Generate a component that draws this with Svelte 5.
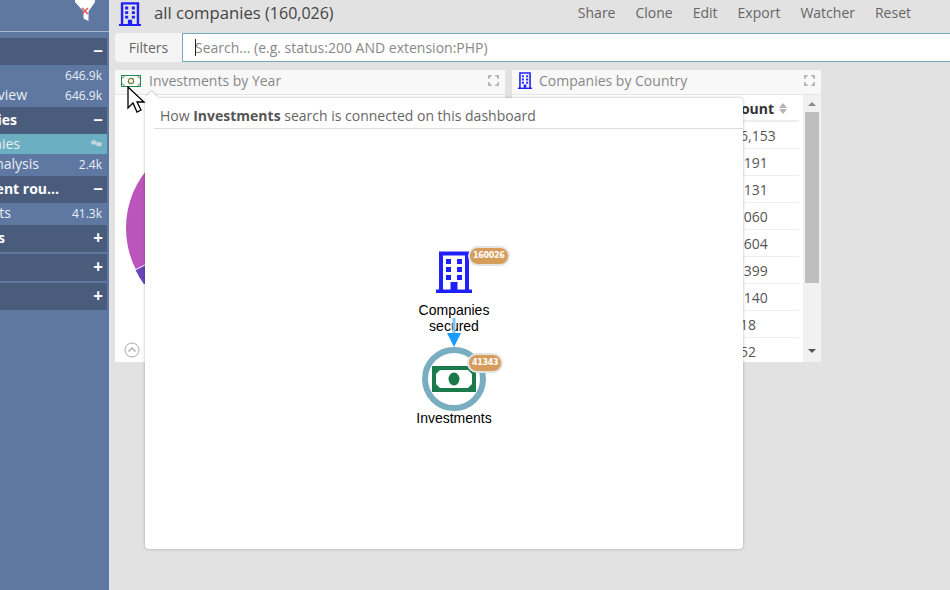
<script>
  const sideItems = [
    { type: 'head', end: 0, text: '', icon: '−' },
    { type: 'row', end: 0, text: '', value: '646.9k' },
    { type: 'row', end: 27, text: 'Overview', value: '646.9k' },
    { type: 'head', end: 17, text: 'Companies', icon: '−', gap: true },
    { type: 'row active', end: 20, text: 'All companies', value: '' },
    { type: 'row', end: 39, text: 'Analysis', value: '2.4k' },
    { type: 'head', end: 59, text: 'Investment rou...', icon: '−', gap: true },
    { type: 'row', end: 11, text: 'Investments', value: '41.3k' },
    { type: 'head', end: 5, text: 'Funds', icon: '+', gap: true },
    { type: 'head', end: 0, text: '', icon: '+', gap: true },
    { type: 'head', end: 0, text: '', icon: '+', gap: true }
  ];
  const menu = ['Share', 'Clone', 'Edit', 'Export', 'Watcher', 'Reset'];
  const counts = ['36,153', '5,191', '4,131', '3,060', '2,604', '2,399', '2,140', '918', '752'];
</script>

{#snippet building()}
  <svg class="building" viewBox="0 0 36 42" preserveAspectRatio="none">
    <path d="M5 40V2.5h26V40" fill="none" stroke="#2020ff" stroke-width="4" />
    <path d="M0 38.5h36V42H0z" fill="#2020ff" />
    <path d="M14.5 31h7v8h-7z" fill="#2020ff" />
    <path d="M10 8h5v5h-5zM21 8h5v5h-5zM10 16h5v5h-5zM21 16h5v5h-5zM10 24h5v5h-5zM21 24h5v5h-5z" fill="#2020ff" />
  </svg>
{/snippet}

{#snippet expand()}
  <svg class="expand" viewBox="0 0 12 12">
    <path d="M1 4V1h3M8 1h3v3M11 8v3H8M4 11H1V8" fill="none" stroke="#999" stroke-width="1.4" />
  </svg>
{/snippet}

<div class="app">
  <aside class="sidebar">
    <div class="brand">
      <svg class="funnel" viewBox="0 0 20 22">
        <path d="M0 0h20v2l-6.5 9.5V21L8.5 18.5v-7L0 2z" fill="#fff" />
        <path d="M7 8l6 6M13 8l-6 6" stroke="#e0555a" stroke-width="1.6" />
      </svg>
    </div>
    <nav class="nav">
      {#each sideItems as item}
        <div class="{item.type}" class:gap={item.gap}>
          <div class="label" style="width: {item.end}px"><span>{item.text}</span></div>
          {#if item.type === 'head'}
            <span class="toggle">{item.icon}</span>
          {:else if item.value}
            <span class="value">{item.value}</span>
          {:else}
            <svg class="link" viewBox="0 0 11 7">
              <ellipse cx="3" cy="2.5" rx="2.8" ry="2.2" fill="#c3d4dc" />
              <ellipse cx="8" cy="4.2" rx="2.8" ry="2.2" fill="#c3d4dc" />
            </svg>
          {/if}
        </div>
      {/each}
    </nav>
  </aside>

  <main class="main">
    <header class="topbar">
      <div class="title">
        {@render building()}
        <span>all companies <small>(160,026)</small></span>
      </div>
      <div class="menu">
        {#each menu as m}<span>{m}</span>{/each}
      </div>
    </header>

    <div class="filters">
      <div class="filters-label">Filters</div>
      <div class="search"><i></i>Search... (e.g. status:200 AND extension:PHP)</div>
    </div>

    <div class="panels">
      <section class="panel first">
        <div class="panel-head">
          <svg class="money-small" viewBox="0 0 20 12">
            <rect x=".5" y=".5" width="19" height="11" fill="#fff" stroke="#1d8a5a" />
            <path d="M.5 3.5Q3 3 3.5.5M16.5.5Q17 3 19.5 3.5M.5 8.5Q3 9 3.5 11.5M16.5 11.5Q17 9 19.5 8.5" fill="none" stroke="#6b7f3a" />
            <circle cx="10" cy="6" r="2.6" fill="none" stroke="#6d7a3a" stroke-width="1.2" />
          </svg>
          <span class="panel-title">Investments by Year</span>
          {@render expand()}
        </div>
        <div class="pie-body">
          <svg class="pie" viewBox="0 0 184 184">
            <circle cx="92" cy="92" r="92" fill="#bb55bb" />
            <path d="M92 92L9 134A93 93 0 0 0 18 149z" fill="#6a45b8" stroke="#fff" stroke-width="1" />
          </svg>
          <svg class="collapse" viewBox="0 0 16 16">
            <circle cx="8" cy="8" r="7" fill="none" stroke="#aaa" />
            <path d="M4.5 9.5L8 6l3.5 3.5" fill="none" stroke="#aaa" stroke-width="1.4" />
          </svg>
        </div>
      </section>

      <section class="panel second">
        <div class="panel-head">
          <span class="small-building">{@render building()}</span>
          <span class="panel-title">Companies by Country</span>
          {@render expand()}
        </div>
        <div class="table-wrap">
          <table>
            <thead>
              <tr><th></th><th>Count <span class="sort"><b></b><u></u></span></th></tr>
            </thead>
            <tbody>
              {#each counts as c}
                <tr><td></td><td>{c}</td></tr>
              {/each}
            </tbody>
          </table>
          <div class="scrollbar">
            <span class="up"></span>
            <span class="thumb"></span>
            <span class="down"></span>
          </div>
        </div>
      </section>
    </div>
  </main>

  <div class="popover">
    <div class="pop-title">How <b>Investments</b> search is connected on this dashboard</div>
    <div class="graph">
      <div class="node companies">
        {@render building()}
        <span class="badge">160026</span>
        <div class="node-label">Companies<br />secured</div>
      </div>
      <svg class="edge" viewBox="0 0 14 30">
        <path d="M7 0v16" stroke="#7cc4f5" stroke-width="3" />
        <path d="M0 15h14L7 29z" fill="#1a9cff" />
      </svg>
      <div class="node investments">
        <div class="ring">
          <svg viewBox="0 0 44 26">
            <path fill-rule="evenodd" d="M0 0h44v26H0zM8 4L4 8v10l4 4h28l4-4V8l-4-4z" fill="#1a7a4c" />
            <ellipse cx="22" cy="13" rx="5.5" ry="6.5" fill="#1a7a4c" />
          </svg>
        </div>
        <span class="badge">41343</span>
        <div class="node-label">Investments</div>
      </div>
    </div>
  </div>

  <svg class="cursor" viewBox="0 0 20 27">
    <path d="M1 1v21l5-5 4 9 4-2-4-8h7z" fill="#fff" stroke="#000" stroke-width="1.3" />
  </svg>
</div>

<style>
  :global(body) {
    margin: 0;
    background: #e2e2e2;
    overflow: hidden;
  }
  .app {
    display: flex;
    width: 950px;
    height: 590px;
    overflow: hidden;
    position: relative;
    font-family: "Open Sans", sans-serif;
    color: #555;
  }
  .sidebar {
    width: 109px;
    flex: none;
    background: #5f78a2;
    overflow: hidden;
    color: #fff;
  }
  .brand {
    height: 31px;
    border-bottom: 1px solid #a9b7cc;
    display: flex;
    justify-content: flex-end;
    padding-right: 14px;
  }
  .funnel {
    width: 20px;
    height: 22px;
  }
  .nav {
    padding-top: 6px;
    width: 107px;
  }
  .head, .row {
    display: flex;
    align-items: center;
    justify-content: space-between;
    white-space: nowrap;
  }
  .head {
    height: 27px;
    background: #4a5c7c;
    font-weight: 700;
    font-size: 14px;
  }
  .head .label {
    margin-top: -2px;
  }
  .head.gap { margin-top: 2px; }
  .row {
    height: 20px;
    font-size: 14px;
    color: #e9eef5;
  }
  .row .label {
    margin-top: -1px;
  }
  .row.active {
    background: #6dafc2;
  }
  .label {
    display: flex;
    justify-content: flex-end;
    flex: none;
  }
  .toggle {
    font-size: 17px;
    font-weight: 700;
    margin: -2px 4px 0 0;
    line-height: 1;
  }
  .value {
    font-size: 12px;
    margin-right: 5px;
  }
  .link {
    width: 11px;
    height: 7px;
    margin: -2px 5px 0 0;
  }
  .main {
    flex: 1;
    min-width: 0;
    padding-left: 6px;
  }
  .topbar {
    height: 32px;
    display: flex;
    align-items: flex-start;
    justify-content: space-between;
    padding-right: 39px;
  }
  .title {
    display: flex;
    align-items: flex-start;
    gap: 13px;
    font-size: 16.7px;
    line-height: 26px;
    color: #444;
    margin-left: 4px;
  }
  .title small {
    font-size: 16px;
  }
  .topbar :global(.building) {
    width: 22px;
    height: 24px;
    display: block;
    margin-top: 2px;
  }
  .menu {
    display: flex;
    gap: 20px;
    font-size: 14px;
    line-height: 26px;
    color: #666;
  }
  .filters {
    display: flex;
    height: 29px;
    margin-top: 1px;
  }
  .filters-label {
    width: 67px;
    background: #f5f5f5;
    border-radius: 4px 0 0 4px;
    font-size: 14px;
    text-align: center;
    line-height: 30px;
    color: #666;
  }
  .search {
    flex: 1;
    background: #fff;
    border: 1px solid #6facbd;
    border-right: none;
    font-size: 14px;
    line-height: 27px;
    color: #888;
    padding-left: 12px;
    position: relative;
  }
  .search i {
    position: absolute;
    left: 12px;
    top: 5px;
    width: 1px;
    height: 17px;
    background: #222;
  }
  .panels {
    display: flex;
    gap: 7px;
    margin-top: 8px;
  }
  .panel {
    height: 292px;
    background: #fff;
    overflow: hidden;
  }
  .first { width: 390px; }
  .second { width: 309px; }
  .panel-head {
    background: #f8f8f8;
    border-bottom: 1px solid #e6e6e6;
    display: flex;
    align-items: center;
    padding: 0 6px 3px;
    height: 21px;
    font-size: 14px;
    color: #888;
  }
  .panel-title {
    flex: 1;
    margin-left: 8px;
  }
  .money-small {
    width: 20px;
    height: 12px;
  }
  .small-building {
    display: flex;
    margin-right: -1px;
  }
  .small-building :global(.building) {
    width: 14px;
    height: 17px;
  }
  .expand {
    width: 11px;
    height: 11px;
  }
  .pie-body {
    position: relative;
    height: 267px;
    padding: 41px 0 0 11px;
    box-sizing: border-box;
    overflow: hidden;
  }
  .pie {
    width: 184px;
    height: 184px;
    display: block;
  }
  .collapse {
    position: absolute;
    left: 9px;
    bottom: 4px;
    width: 16px;
    height: 16px;
  }
  .table-wrap {
    display: flex;
    height: 267px;
    overflow: hidden;
  }
  table {
    width: 287px;
    margin-right: 4px;
    flex: none;
    border-collapse: collapse;
    font-size: 14px;
    table-layout: fixed;
    height: 0;
  }
  th {
    height: 24px;
    padding: 1px 0 0;
    text-align: left;
    color: #333;
    border-bottom: 2px solid #eee;
    font-weight: 700;
  }
  td {
    height: 26px;
    padding: 0;
    border-bottom: 1px solid #eee;
    color: #555;
  }
  th:last-child, td:last-child {
    width: 67px;
  }
  .sort {
    display: inline-flex;
    flex-direction: column;
    gap: 1px;
    vertical-align: middle;
    margin: -2px 0 0 1px;
  }
  .sort b, .sort u {
    width: 0;
    height: 0;
    border-left: 4px solid transparent;
    border-right: 4px solid transparent;
  }
  .sort b { border-bottom: 5px solid #b5b5b5; }
  .sort u { border-top: 5px solid #b5b5b5; }
  .scrollbar {
    width: 18px;
    background: #f1f1f1;
    display: flex;
    flex-direction: column;
    align-items: center;
    padding: 7px 0;
    box-sizing: border-box;
  }
  .scrollbar .thumb {
    width: 14px;
    height: 171px;
    background: #bdbdbd;
    margin-top: 6px;
    margin-bottom: 66px;
  }
  .up, .down {
    width: 0;
    height: 0;
    border-left: 4px solid transparent;
    border-right: 4px solid transparent;
  }
  .up { border-bottom: 4px solid #888; }
  .down { border-top: 4px solid #555; }
  .popover {
    position: absolute;
    left: 145px;
    top: 98px;
    width: 598px;
    height: 451px;
    background: #fff;
    border-radius: 4px;
    box-shadow: 0 0 3px rgba(0, 0, 0, 0.3);
    padding-left: 9px;
    box-sizing: border-box;
  }
  .popover::before {
    content: '';
    position: absolute;
    left: 2px;
    top: -5px;
    width: 9px;
    height: 9px;
    background: #fff;
    transform: rotate(45deg);
    box-shadow: -1px -1px 1px rgba(0, 0, 0, 0.15);
  }
  .pop-title {
    height: 30px;
    border-bottom: 1px solid #ddd;
    font-size: 14px;
    line-height: 35px;
    padding-left: 6px;
    color: #666;
    position: relative;
  }
  .pop-title b {
    color: #555;
  }
  .graph {
    position: relative;
  }
  .node {
    position: absolute;
    width: 120px;
    text-align: center;
  }
  .companies {
    left: 240px;
    top: 122px;
  }
  .companies :global(.building) {
    width: 36px;
    height: 42px;
    display: block;
    margin: 0 auto;
  }
  .investments {
    left: 240px;
    top: 218px;
  }
  .ring {
    width: 64px;
    height: 64px;
    box-sizing: border-box;
    border: 6px solid #78aebf;
    border-radius: 50%;
    margin: 0 auto;
    display: flex;
    align-items: center;
    justify-content: center;
  }
  .ring svg {
    width: 44px;
    height: 26px;
    flex: none;
  }
  .node-label {
    font-family: "Liberation Sans", Arial, sans-serif;
    font-size: 14px;
    line-height: 16px;
    color: #000;
    margin-top: 9px;
  }
  .investments .node-label {
    margin-top: -1px;
  }
  .badge {
    position: absolute;
    background: #d69c5b;
    color: #fff;
    font-family: "DejaVu Sans", sans-serif;
    font-weight: 700;
    font-size: 8px;
    letter-spacing: -0.3px;
    border: 2px solid #e3e3e3;
    border-radius: 10px;
    padding: 0 3px;
    line-height: 16px;
  }
  .companies .badge {
    left: 74px;
    top: -5px;
  }
  .investments .badge {
    left: 73px;
    top: 6px;
  }
  .edge {
    position: absolute;
    left: 293px;
    top: 189px;
    width: 14px;
    height: 30px;
  }
  .cursor {
    position: absolute;
    left: 127px;
    top: 86px;
    width: 20px;
    height: 27px;
  }
</style>
